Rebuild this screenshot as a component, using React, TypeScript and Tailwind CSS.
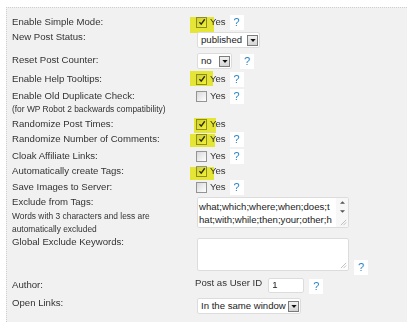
import React from "react"

const Help = ({ className = "" }: { className?: string }) => (
  <span className={`flex h-[15px] w-[14px] shrink-0 items-center justify-center bg-white text-[11px] leading-none text-[#2a86c6] ${className}`}>
    ?
  </span>
)

function Check({ on }: { on?: boolean }) {
  return (
    <span className="flex h-[11px] w-[11px] shrink-0 items-center justify-center border border-[#949494] bg-gradient-to-br from-[#d9d9d9] to-white">
      {on && (
        <svg viewBox="0 0 9 9" className="h-[8px] w-[8px]">
          <path d="M1.6 4.6 L3.6 7 L7.6 1.4" fill="none" stroke="#2d2d2d" strokeWidth="1.5" />
        </svg>
      )}
    </span>
  )
}

function YesBox({ on, help, hl }: { on?: boolean; help?: boolean; hl?: string }) {
  return (
    <div className="relative flex h-[16px] items-center">
      <span className="ml-[1px]">
        <Check on={on} />
      </span>
      <span className="ml-[3px]">Yes</span>
      {help && <Help className="ml-[4px]" />}
      {hl && <span className={`pointer-events-none absolute bg-[#f3f33a] mix-blend-multiply ${hl}`} />}
    </div>
  )
}

function Select({ value, className }: { value: string; className: string }) {
  return (
    <div className={`flex h-[16px] items-center rounded-[2px] border border-[#dcdcdc] bg-white pl-[3px] pr-[1px] text-[#222] ${className}`}>
      <span className="leading-none">{value}</span>
      <span className="ml-auto flex h-[11px] w-[11px] items-center justify-center border border-[#7b7b7b] bg-gradient-to-b from-[#f2f2f2] to-[#d4d4d4]">
        <svg viewBox="0 0 7 4" className="h-[3px] w-[6px]">
          <path d="M0 0 H7 L3.5 4 Z" fill="#111" />
        </svg>
      </span>
    </div>
  )
}

function Grip() {
  return (
    <svg viewBox="0 0 8 8" className="absolute bottom-[1px] right-[1px] h-[7px] w-[7px]">
      <path d="M7 1 L1 7 M7 4 L4 7" stroke="#a8a8a8" strokeWidth="0.8" />
    </svg>
  )
}

function Row({ h, label, children }: { h: string; label: React.ReactNode; children?: React.ReactNode }) {
  return (
    <div className={`flex ${h}`}>
      <div className="w-[183px] shrink-0 leading-[16px]">{label}</div>
      <div className="relative flex-1">{children}</div>
    </div>
  )
}

export default function App() {
  return (
    <div className="h-[333px] w-[412px] bg-white font-['Liberation_Sans',Arial,sans-serif] text-[9.6px] text-[#333]">
      <div className="ml-[6px] pt-[7px]">
        <div className="h-[315px] w-[401px] border-l border-t border-dotted border-[#cfcfcf] bg-[#f1f1f1] pl-[5px] pt-[6px]">
          <Row h="h-[15px]" label="Enable Simple Mode:">
            <YesBox on help hl="left-[-5px] top-[3px] h-[16px] w-[24px]" />
          </Row>
          <Row h="h-[23px]" label="New Post Status:">
            <div className="pt-[3px]">
              <Select value="published" className="ml-[2px] w-[63px]" />
            </div>
          </Row>
          <Row h="h-[19px]" label="Reset Post Counter:">
            <div className="flex items-center pt-[1px]">
              <Select value="no" className="ml-[2px] w-[35px]" />
              <Help className="ml-[8px]" />
            </div>
          </Row>
          <Row h="h-[17px]" label="Enable Help Tooltips:">
            <YesBox on help hl="left-[-5px] top-[0px] h-[15px] w-[23px]" />
          </Row>
          <Row
            h="h-[28px]"
            label={
              <>
                <div>Enable Old Duplicate Check:</div>
                <div className="text-[8.4px] leading-[10px]">(for WP Robot 2 backwards compatibility)</div>
              </>
            }
          >
            <YesBox help />
          </Row>
          <Row h="h-[15px]" label="Randomize Post Times:">
            <YesBox on hl="left-[-1px] top-[2px] h-[15px] w-[22px]" />
          </Row>
          <Row h="h-[17px]" label="Randomize Number of Comments:">
            <YesBox on help hl="left-[-5px] top-[3px] h-[13px] w-[25px]" />
          </Row>
          <Row h="h-[15px]" label="Cloak Affiliate Links:">
            <YesBox help />
          </Row>
          <Row h="h-[16px]" label="Automatically create Tags:">
            <YesBox on hl="left-[-5px] top-[4px] h-[13px] w-[24px]" />
          </Row>
          <Row h="h-[15px]" label="Save Images to Server:">
            <YesBox help />
          </Row>
          <Row
            h="h-[40px]"
            label={
              <>
                <div>Exclude from Tags:</div>
                <div className="text-[8.4px] leading-[13px]">Words with 3 characters and less are</div>
                <div className="text-[8.4px] leading-[13px]">automatically excluded</div>
              </>
            }
          >
            <div className="pt-[3px]">
              <div className="relative ml-[2px] flex h-[31px] w-[152px] rounded-[2px] border border-[#dcdcdc] bg-white">
                <div className="flex-1 pl-[1px] pt-[2px] leading-[13px] text-[#222]">
                  <div>what;which;where;when;does;t</div>
                  <div>hat;with;while;then;your;other;h</div>
                </div>
                <div className="flex w-[12px] flex-col bg-[#f7f7f7]">
                  <div className="flex h-[9px] items-center justify-center">
                    <svg viewBox="0 0 6 3" className="h-[3px] w-[5px]">
                      <path d="M0 3 H6 L3 0 Z" fill="#555" />
                    </svg>
                  </div>
                  <div className="flex h-[9px] items-center justify-center">
                    <svg viewBox="0 0 6 3" className="h-[3px] w-[5px]">
                      <path d="M0 0 H6 L3 3 Z" fill="#555" />
                    </svg>
                  </div>
                </div>
                <Grip />
              </div>
            </div>
          </Row>
          <Row h="h-[43px]" label="Global Exclude Keywords:">
            <div className="flex items-start pt-[4px]">
              <div className="relative ml-[2px] h-[33px] w-[152px] rounded-[2px] border border-[#dcdcdc] bg-white">
                <Grip />
              </div>
              <Help className="ml-[5px] mt-[22px]" />
            </div>
          </Row>
          <Row h="h-[18px]" label="Author:">
            <div className="flex items-start">
              <span className="leading-[12px]">Post as User ID</span>
              <div className="ml-[6px] mt-[1px] flex h-[15px] w-[36px] items-center rounded-[2px] border border-[#dcdcdc] bg-white pl-[3px] text-[#222]">
                1
              </div>
              <Help className="ml-[5px] mt-[2px]" />
            </div>
          </Row>
          <Row h="h-[20px]" label="Open Links:">
            <div className="pt-[3px]">
              <Select value="In the same window" className="ml-[2px] w-[104px]" />
            </div>
          </Row>
        </div>
      </div>
    </div>
  )
}
